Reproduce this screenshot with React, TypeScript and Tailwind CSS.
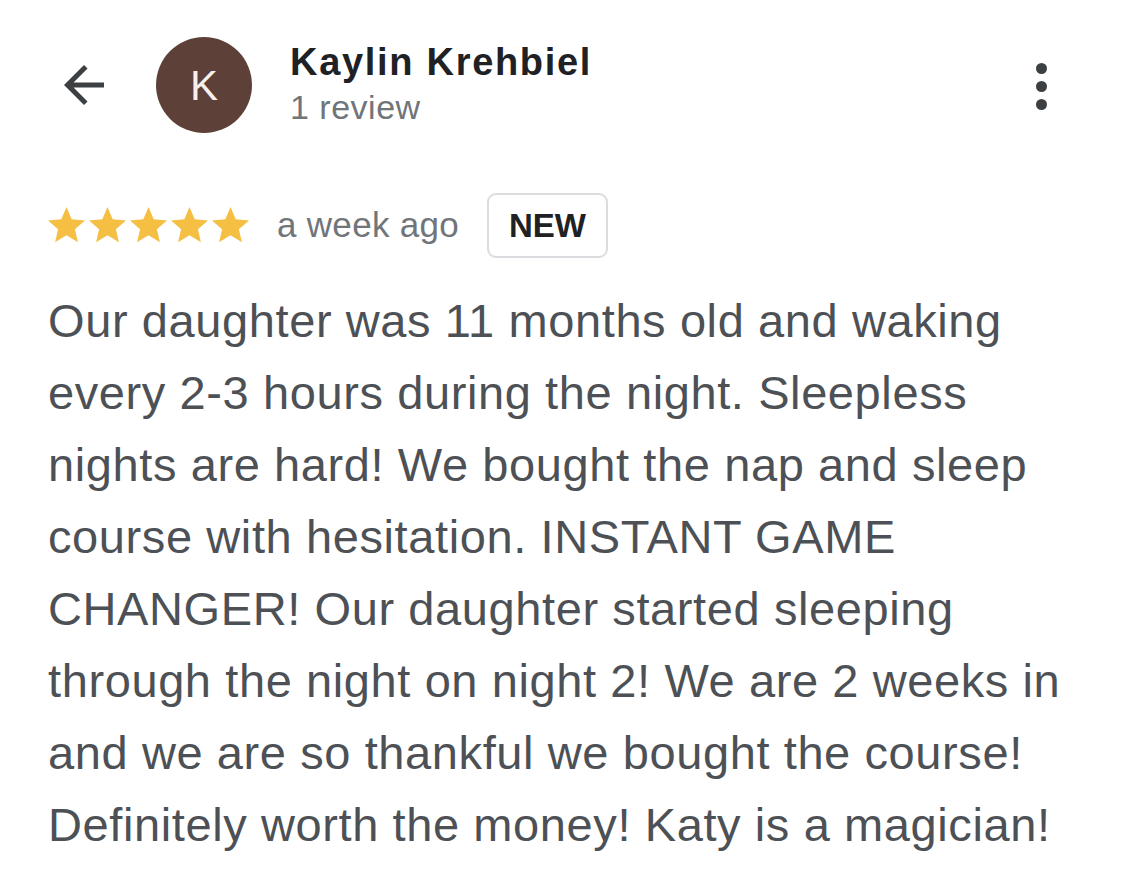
import React from "react";

function Star() {
  return (
    <svg width="37" height="37" viewBox="2 2 20 20" className="block">
      <path
        d="M12 17.27L18.18 21l-1.64-7.03L22 9.24l-7.19-.61L12 2 9.19 8.63 2 9.24l5.46 4.73L5.82 21z"
        fill="#f4bf42"
      />
    </svg>
  );
}

export default function App() {
  return (
    <div
      className="w-[1125px] h-[895px] bg-white overflow-hidden"
      style={{ fontFamily: '"Liberation Sans", Arial, sans-serif' }}
    >
      <div className="flex items-center pl-[54px] pr-[78px] pt-[37px]">
        <svg width="60" height="60" viewBox="0 0 24 24" className="shrink-0">
          <path d="M20 11H7.83l5.59-5.59L12 4l-8 8 8 8 1.41-1.41L7.83 13H20v-2z" fill="#3c4043" />
        </svg>
        <div className="ml-[42px] w-[96px] h-[96px] rounded-full bg-[#5d4037] flex items-center justify-center text-[#f5f0ee] text-[42px] shrink-0">
          K
        </div>
        <div className="ml-[38px] flex-1 -mt-[2px]">
          <div className="text-[38px] font-bold text-[#202124] leading-[46px] tracking-[1.7px]">Kaylin Krehbiel</div>
          <div className="text-[34px] text-[#70757a] leading-[44px] tracking-[0.5px]">1 review</div>
        </div>
        <div className="flex flex-col gap-[7px] mt-[2px]">
          <div className="w-[11px] h-[11px] rounded-full bg-[#3c4043]" />
          <div className="w-[11px] h-[11px] rounded-full bg-[#3c4043]" />
          <div className="w-[11px] h-[11px] rounded-full bg-[#3c4043]" />
        </div>
      </div>

      <div className="flex items-center pl-[48px] mt-[60px]">
        <div className="flex gap-[4px]">
          <Star />
          <Star />
          <Star />
          <Star />
          <Star />
        </div>
        <span className="ml-[28px] text-[35px] text-[#70757a] tracking-[0.3px]">a week ago</span>
        <span className="ml-[28px] h-[65px] w-[121px] justify-center flex items-center border-2 border-[#dadce0] rounded-[9px] text-[33px] font-bold text-[#202124]">
          NEW
        </span>
      </div>

      <p className="pl-[48px] pr-[40px] mt-[27px] text-[47px] leading-[72px] tracking-[0.6px] text-[#4d5156]">
        Our daughter was 11 months old and waking every 2-3 hours during the night. Sleepless nights are hard! We bought the nap and sleep course with hesitation. INSTANT GAME CHANGER! Our daughter started sleeping through the night on night 2! We are 2 weeks in and we are so thankful we bought the course! Definitely worth the money! Katy is a magician!
      </p>
    </div>
  );
}
